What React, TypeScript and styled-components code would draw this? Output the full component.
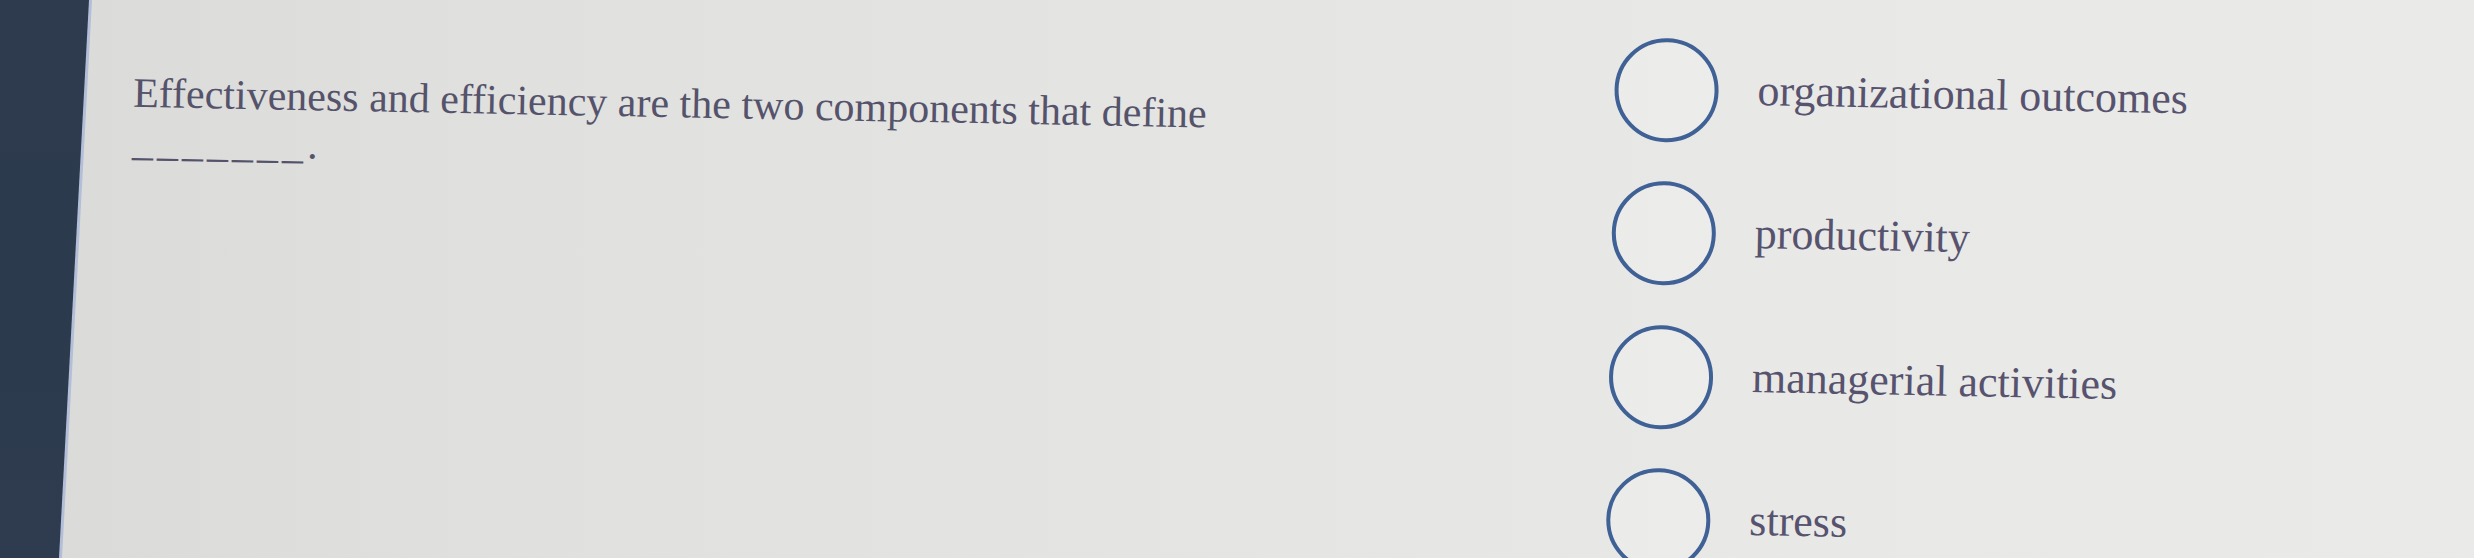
import React from "react";
import styled, { createGlobalStyle } from "styled-components";

const GlobalStyle = createGlobalStyle`
  html, body {
    margin: 0;
    padding: 0;
    width: 100%;
    height: 100%;
    overflow: hidden;
  }
  body {
    font-family: "Liberation Serif", "Times New Roman", serif;
  }
`;

const Page = styled.div`
  display: flex;
  width: 100vw;
  height: 100vh;
  overflow: hidden;
  background: linear-gradient(
    90deg,
    #dadad8 0%,
    #e0e0de 20%,
    #e4e4e2 45%,
    #e8e8e6 70%,
    #eaeae8 100%
  );
`;

const Bezel = styled.div`
  position: relative;
  flex: 0 0 92px;
  height: 100%;
  background: #b3bfd8;
  clip-path: polygon(0 0, 92px 0, 62px 100%, 0 100%);

  &::before {
    content: "";
    position: absolute;
    inset: 0;
    background: linear-gradient(180deg, #2e3b4f 0%, #2c3a4d 60%, #2f3c50 100%);
    clip-path: polygon(0 0, 89px 0, 59px 100%, 0 100%);
  }
`;

const Content = styled.main`
  flex: 1;
  display: grid;
  grid-template-columns: 1524px 1fr;
  align-items: start;
  transform: rotate(1.1deg);
  transform-origin: 0 0;
`;

const Question = styled.div`
  padding: 68px 0 0 43px;
  max-width: 1120px;
  font-size: 42px;
  line-height: 48px;
  color: #55536b;
`;

const Blank = styled.span`
  letter-spacing: 4px;
`;

const Options = styled.ul`
  list-style: none;
  margin: 0;
  padding: 8px 0 0 0;
  display: flex;
  flex-direction: column;
  gap: 39.4px;
`;

const Option = styled.li`
  display: flex;
  align-items: center;
  gap: 39px;
`;

const Radio = styled.span`
  flex: 0 0 auto;
  box-sizing: border-box;
  width: 104px;
  height: 104px;
  border-radius: 50%;
  border: 4px solid #3f6195;
  background: rgba(240, 240, 240, 0.5);
`;

const Label = styled.span`
  font-size: 44px;
  line-height: 1;
  padding-bottom: 2px;
  color: #57536e;
  white-space: nowrap;
`;

const answers = [
  "organizational outcomes",
  "productivity",
  "managerial activities",
  "stress",
];

export default function App() {
  return (
    <>
      <GlobalStyle />
      <Page>
        <Bezel />
        <Content>
          <Question>
            Effectiveness and efficiency are the two components that define{" "}
            <Blank>_______</Blank>.
          </Question>
          <Options>
            {answers.map((a) => (
              <Option key={a}>
                <Radio />
                <Label>{a}</Label>
              </Option>
            ))}
          </Options>
        </Content>
      </Page>
    </>
  );
}
